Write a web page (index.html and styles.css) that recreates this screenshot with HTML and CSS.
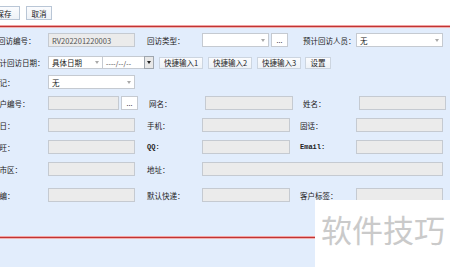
FILE: index.html
```html
<!DOCTYPE html>
<html lang="zh">
<head>
<meta charset="utf-8">
<link rel="stylesheet" href="styles.css">
</head>
<body>
<div class="page">
  <div class="toolbar">
    <div class="tbtn save">保存</div>
    <div class="tbtn">取消</div>
  </div>
  <div class="sep"></div>
  <div class="form">
    <div class="row r1">
      <div class="lbl l1 first">回访编号：</div>
      <div class="box ro w87">RV202201220003</div>
      <div class="lbl l2">回访类型：</div>
      <div class="box sel w67"><span></span><i class="arrow"></i></div>
      <div class="dots">...</div>
      <div class="lbl l3 wide">预计回访人员：</div>
      <div class="box sel w87"><span>无</span><i class="arrow"></i></div>
    </div>
    <div class="row r2">
      <div class="lbl l1">预计回访日期：</div>
      <div class="box sel w55"><span>具体日期</span><i class="arrow"></i></div>
      <div class="box date">----/--/--</div>
      <div class="ddbtn"><i class="arrow dark"></i></div>
      <div class="btn quick">快捷输入1</div>
      <div class="btn quick">快捷输入2</div>
      <div class="btn quick">快捷输入3</div>
      <div class="btn set">设置</div>
    </div>
    <div class="row r3">
      <div class="lbl l1">标记：</div>
      <div class="box sel w87"><span>无</span><i class="arrow"></i></div>
    </div>
    <div class="row r4">
      <div class="lbl l1">客户编号：</div>
      <div class="box ro w71"></div>
      <div class="dots">...</div>
      <div class="lbl l2 short">网名：</div>
      <div class="box ro w88"></div>
      <div class="lbl l3">姓名：</div>
      <div class="box ro w87"></div>
    </div>
    <div class="row r5">
      <div class="lbl l1">生日：</div>
      <div class="box ro w87"></div>
      <div class="lbl l2">手机：</div>
      <div class="box ro w88"></div>
      <div class="lbl l3">固话：</div>
      <div class="box ro w87"></div>
    </div>
    <div class="row r6">
      <div class="lbl l1">旺旺：</div>
      <div class="box ro w87"></div>
      <div class="lbl l2 latin">QQ:</div>
      <div class="box ro w88"></div>
      <div class="lbl l3 latin">Email:</div>
      <div class="box ro w87"></div>
    </div>
    <div class="row r7">
      <div class="lbl l1">省市区：</div>
      <div class="box ro w87"></div>
      <div class="lbl l2">地址：</div>
      <div class="box ro w241"></div>
    </div>
    <div class="row r8">
      <div class="lbl l1">邮编：</div>
      <div class="box ro w87"></div>
      <div class="lbl l2">默认快递：</div>
      <div class="box ro w88"></div>
      <div class="lbl l3">客户标签：</div>
      <div class="box ro w87"></div>
    </div>
  </div>
  <div class="sep bottom"></div>
</div>
<div class="watermark">软件技巧</div>
</body>
</html>
```
FILE: styles.css
```css
* { box-sizing: border-box; }
html, body { margin: 0; padding: 0; }
body {
  width: 450px;
  height: 267px;
  overflow: hidden;
  position: relative;
  background: #e2edfc;
  font-family: "Noto Sans CJK SC", "Noto Sans", sans-serif;
  font-size: 7.5px;
  color: #222;
}
.page { margin-left: -12px; width: 480px; }
.toolbar {
  background: #fff;
  height: 26px;
  display: flex;
  align-items: flex-start;
  gap: 6px;
  padding-top: 6px;
}
.tbtn {
  width: 26px;
  height: 14px;
  border: 1px solid #b9c6d6;
  background: linear-gradient(#fbfcfe, #eef2f7);
  display: flex;
  align-items: center;
  justify-content: center;
  color: #222;
}
.tbtn.save { width: 32px; }
.sep {
  height: 1px;
  background: #c03434;
  box-shadow: 0 -1px 0 #f1a3a3, 0 1px 0 #efb3b3;
}
.sep.bottom { margin-top: 35px; }
.form { padding-top: 6px; }
.row { display: flex; align-items: center; height: 14px; }
.r2 { margin-top: 9px; }
.r3 { margin-top: 6px; }
.r4 { margin-top: 7px; }
.r5, .r6, .r7 { margin-top: 8px; }
.r8 { margin-top: 12px; }
.r2 { height: 13px; }

.lbl { white-space: nowrap; color: #222; }
.l1 { width: 60px; padding-left: 4px; }
.l1.first { padding-left: 10px; }
.l2 { width: 67px; padding-left: 12px; }
.l2.short { padding-left: 11px; }
.l3 { width: 66px; padding-left: 10px; }
.l3.wide { width: 68px; padding-left: 15px; }
.latin { font-family: "Liberation Mono", monospace; font-size: 7px; font-weight: bold; }

.box {
  height: 14px;
  border: 1px solid #c5cad1;
  background: #fff;
  display: flex;
  align-items: center;
  padding: 0 3px;
  white-space: nowrap;
}
.ro { background: #ebebeb; color: #555; }
.sel { justify-content: space-between; }
.w55 { width: 55px; height: 13px; }
.w67 { width: 67px; }
.w71 { width: 71px; }
.w87 { width: 87px; }
.w88 { width: 88px; }
.w241 { width: 241px; }
.arrow {
  width: 0;
  height: 0;
  border-left: 2.5px solid transparent;
  border-right: 2.5px solid transparent;
  border-top: 3px solid #a9a9a9;
}
.arrow.dark { border-top-color: #222; }
.dots {
  width: 17px;
  height: 14px;
  margin-left: 2px;
  border: 1px solid #c5cad1;
  background: #fff;
  display: flex;
  justify-content: center;
  align-items: flex-end;
  padding-bottom: 2px;
  font-size: 7px;
  line-height: 1;
}
.date {
  width: 41px;
  height: 13px;
  font-size: 6.5px;
  letter-spacing: 0.2px;
  border-left: none;
  border-right: none;
}
.ddbtn {
  width: 10px;
  height: 13px;
  border: 1px solid #9fa6ae;
  background: #e8e8e8;
  display: flex;
  align-items: center;
  justify-content: center;
}
.btn {
  height: 12px;
  border: 1px solid #ccd5e0;
  background: linear-gradient(#fbfcfe, #eef2f7);
  display: flex;
  align-items: center;
  justify-content: center;
  white-space: nowrap;
}
.quick { width: 44px; margin-left: 5px; }
.set { width: 26px; margin-left: 4px; }

.watermark {
  position: absolute;
  left: 315px;
  top: 200px;
  width: 135px;
  height: 67px;
  background: #fff;
  color: #cacaca;
  font-size: 31px;
  line-height: 1;
  padding: 13px 0 0 6px;
  white-space: nowrap;
}
```
